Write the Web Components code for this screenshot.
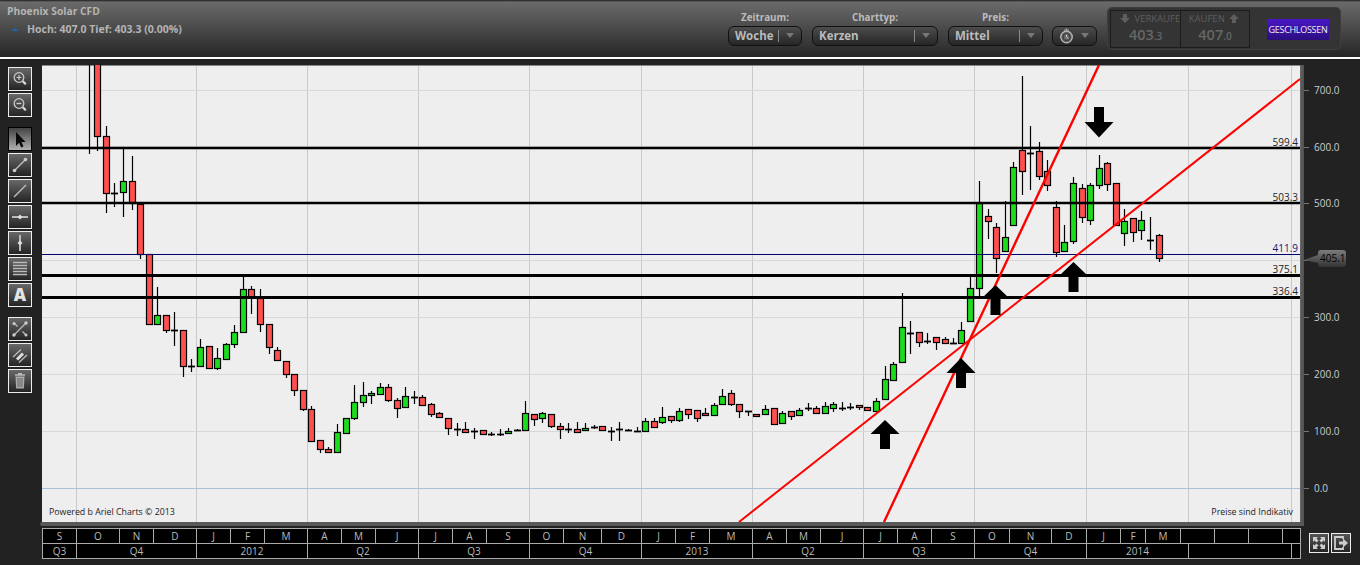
<!DOCTYPE html>
<html lang="de">
<head>
<meta charset="utf-8">
<title>Phoenix Solar CFD</title>
<style>
html, body { margin: 0; height: 565px; overflow: hidden; background: #222; font-family: "Open Sans", "Liberation Sans", sans-serif; }
.main { display: flex; height: 463px; padding-top: 6px; }
.bottom { display: flex; padding-left: 42px; }
</style>
</head>
<body>
<top-bar>
  <instrument-info slot="info" name="Phoenix Solar CFD" stats="Hoch: 407.0 Tief: 403.3 (0.00%)"></instrument-info>
  <select-box slot="controls" label="Zeitraum:" value="Woche" width="74"></select-box>
  <select-box slot="controls" label="Charttyp:" value="Kerzen" width="126"></select-box>
  <select-box slot="controls" label="Preis:" value="Mittel" width="95"></select-box>
  <select-box slot="controls" clock width="45" style="margin-left:-1px"></select-box>
  <price-panel slot="panel"></price-panel>
</top-bar>
<div class="main">
  <tool-bar>
    <tool-button icon="zoomin"></tool-button>
    <tool-button icon="zoomout" group></tool-button>
    <tool-button icon="arrow" active></tool-button>
    <tool-button icon="segment"></tool-button>
    <tool-button icon="line"></tool-button>
    <tool-button icon="hline"></tool-button>
    <tool-button icon="vline"></tool-button>
    <tool-button icon="stack"></tool-button>
    <tool-button icon="text" group></tool-button>
    <tool-button icon="cross"></tool-button>
    <tool-button icon="parallel"></tool-button>
    <tool-button icon="trash"></tool-button>
  </tool-bar>
  <candle-chart></candle-chart>
</div>
<div class="bottom">
  <time-line></time-line>
  <corner-buttons></corner-buttons>
</div>

<script>
// svg bodies for the tool buttons, all on a 24x24 box
const ICONS = {
  zoomin: '<circle cx="11" cy="10.5" r="4.800" fill="none" stroke="#ccc" stroke-width="1.300"/><path d="M11 8v5M8.500 10.500h5" stroke="#ccc" stroke-width="1.200"/><path d="M14.800 14.300l3 3" stroke="#ddd" stroke-width="2.200"/>',
  zoomout: '<circle cx="11" cy="10.5" r="4.800" fill="none" stroke="#ccc" stroke-width="1.300"/><path d="M8.500 10.500h5" stroke="#ccc" stroke-width="1.400"/><path d="M14.800 14.300l3 3" stroke="#ddd" stroke-width="2.200"/>',
  arrow: '<path d="M8 5v14l3.200-3.200 2 4.700 2.300-1-2.100-4.500h4.200z" fill="#0a0a0a"/>',
  segment: '<path d="M6 18L18 6" stroke="#bbb" stroke-width="1.500"/><circle cx="6.500" cy="17.500" r="1.800" fill="#ccc"/><circle cx="17.500" cy="6.500" r="1.800" fill="#ccc"/>',
  line: '<path d="M6 18L18 6" stroke="#bbb" stroke-width="1.500"/>',
  hline: '<path d="M4 12h16" stroke="#bbb" stroke-width="2"/><path d="M12 9.500l2.500 2.500-2.500 2.500-2.500-2.500z" fill="#ddd"/>',
  vline: '<path d="M12 4v16" stroke="#bbb" stroke-width="2"/><path d="M12 9.500l2.500 2.500-2.500 2.500-2.500-2.500z" fill="#ddd"/>',
  stack: '<path d="M5 5.500h14M5 8.500h14M5 11.500h14M5 14.500h14M5 17.500h14" stroke="#bbb" stroke-width="1.300"/>',
  cross: '<path d="M6 18L18 6M6 6l3.500 3.500M14.500 14.500L18 18" stroke="#bbb" stroke-width="1.300"/><circle cx="6" cy="6.500" r="1.500" fill="#ccc"/><circle cx="18" cy="6" r="1.700" fill="#ccc"/><circle cx="6" cy="18" r="1.700" fill="#ccc"/><circle cx="18" cy="18" r="1.500" fill="#ccc"/>',
  parallel: '<path d="M5 14L13 6.500M11 19.500L19 12" stroke="#bbb" stroke-width="1.300"/><path d="M9 16.500l6-6" stroke="#ddd" stroke-width="3"/>',
  trash: '<path d="M7.500 7.500h9l-.6 12h-7.800z" fill="#aaa"/><path d="M7 6h10M10 4.600h4" stroke="#bbb" stroke-width="1.400"/><path d="M10 9v9M12 9v9M14 9v9" stroke="#666"/>'
};

class TopBar extends HTMLElement {
  constructor() {
    super();
    this.attachShadow({ mode: "open" });
    this.shadowRoot.innerHTML = `<style>
      :host { display: flex; box-sizing: border-box; height: 59px; justify-content: space-between;
        background: linear-gradient(#1e1e1e 0, #6a6a6a 2px, #262626 57px, #fff 57px); color: #aaa; }
      .right { display: flex; align-items: flex-start; padding-right: 19px; }
      .controls { display: flex; gap: 10px; padding-top: 10px; margin-right: 10px; }
    </style>
    <slot name="info"></slot>
    <div class="right">
      <div class="controls"><slot name="controls"></slot></div>
      <slot name="panel"></slot>
    </div>`;
  }
}

class InstrumentInfo extends HTMLElement {
  connectedCallback() {
    this.attachShadow({ mode: "open" });
    this.shadowRoot.innerHTML = `<style>
      :host { display: block; padding: 3px 0 0 7px; font: 700 10.300px/17px "Open Sans", sans-serif; color: #b4b4b4; }
      .row { display: flex; align-items: center; margin-top: 1px; }
      .up { width: 0; height: 0; margin: 0 8px 0 4px; border: 4px solid transparent; border-top: 0; border-bottom: 3px solid #1d63b0; }
      .row span + span { font-size: 10.500px; }
    </style>
    <div>${this.getAttribute("name")}</div>
    <div class="row"><span class="up"></span><span>${this.getAttribute("stats")}</span></div>`;
  }
}

class SelectBox extends HTMLElement {
  connectedCallback() {
    const label = this.getAttribute("label") || "";
    const value = this.getAttribute("value") || "";
    const clock = this.hasAttribute("clock");
    this.attachShadow({ mode: "open" });
    this.shadowRoot.innerHTML = `<style>
      :host { display: block; width: ${this.getAttribute("width")}px; font: 700 9.800px/15px "Open Sans", sans-serif; color: #bbb; }
      .label { height: 16px; text-align: center; }
      .box { box-sizing: border-box; height: 20px; display: flex; align-items: center; border: 1px solid #111; border-radius: 6px;
        background: linear-gradient(#4c4c4c, #262626); padding: 0 0 1px 6px; font-size: 11.500px; }
      .value { flex: 1; }
      .sep { width: 1px; height: 12px; background: #888; }
      .tri { width: 0; height: 0; margin: 0 7px 0 7px; border: 4px solid transparent; border-bottom: 0; border-top: 5px solid #777; }
      svg { display: block; }
    </style>
    <div class="label">${label}</div>
    <div class="box">
      <span class="value">${clock ? '<svg width="15" height="18" viewBox="0 0 15 18"><path d="M5 3h5M7.500 1.500v2" stroke="#aaa"/><circle cx="7.500" cy="10" r="5.800" fill="#666" stroke="#bbb" stroke-width="1.200"/><circle cx="7.500" cy="10" r="3.600" fill="none" stroke="#333"/><path d="M7.500 7.500V10l2 1.500" fill="none" stroke="#ccc"/></svg>' : value}</span>
      <span class="sep"></span><span class="tri"></span>
    </div>`;
  }
}

class PricePanel extends HTMLElement {
  constructor() {
    super();
    this.attachShadow({ mode: "open" });
    this.shadowRoot.innerHTML = `<style>
      :host { display: flex; box-sizing: border-box; width: 234px; height: 43px; margin-top: 7px; padding: 3px; align-items: flex-start;
        background: #343434; border-radius: 5px; border: 1px solid #3e3e3e; font: 400 9.500px/12px "Open Sans", sans-serif; color: #5e5e5e; }
      .quote { display: flex; border: 1px solid #1c1c1c; height: 36px; margin: -1px 0 0 -1px; }
      .side { box-sizing: border-box; width: 69px; text-align: center; padding-top: 2px; overflow: hidden; white-space: nowrap; }
      .side:first-child { padding-left: 7px; text-align: left; }
      .side + .side { border-left: 1px solid #1c1c1c; }
      .num { font: 600 14.500px/18px "Open Sans", sans-serif; margin-top: 1px; color: #666; }
      .side:first-child .num { padding-left: 11px; }
      .num small { font-size: 10px; }
      svg { vertical-align: -1px; margin: 0 2px; }
      .closed { box-sizing: border-box; width: 62px; height: 21px; margin: 8px 0 0 17px; text-align: center;
        font: 400 9px/21px "Open Sans", sans-serif; letter-spacing: -.3px; color: #eee; background: linear-gradient(#4a17c4, #2b0e80); }
    </style>
    <div class="quote">
      <div class="side"><svg width="10" height="9"><path d="M3 0h4v4h3L5 9 0 4h3z" fill="#5e5e5e"/></svg> VERKAUFE<div class="num">403<small>.3</small></div></div>
      <div class="side">KAUFEN <svg width="10" height="9"><path d="M3 9h4V5h3L5 0 0 5h3z" fill="#5e5e5e"/></svg><div class="num">407<small>.0</small></div></div>
    </div>
    <div class="closed">GESCHLOSSEN</div>`;
  }
}

class ToolBar extends HTMLElement {
  constructor() {
    super();
    this.attachShadow({ mode: "open" });
    this.shadowRoot.innerHTML = `<style>
      :host { display: flex; flex-direction: column; flex: none; box-sizing: border-box; width: 40px; padding: 2px 0 0 8px; gap: 2px; }
    </style><slot></slot>`;
  }
}

class ToolButton extends HTMLElement {
  connectedCallback() {
    const name = this.getAttribute("icon");
    const active = this.hasAttribute("active");
    const inner = name == "text"
      ? '<span class="a">A</span>'
      : `<svg width="22" height="22" viewBox="1 1 22 22">${ICONS[name]}</svg>`;
    this.attachShadow({ mode: "open" });
    this.shadowRoot.innerHTML = `<style>
      :host { display: block; box-sizing: border-box; width: 24px; height: 24px; border: 1px solid ${active ? "#000" : "#eee"};
        background: ${active ? "linear-gradient(#444, #b0b0b0)" : "linear-gradient(#686868, #242424)"};
        margin-bottom: ${this.hasAttribute("group") ? 8 : 0}px; }
      svg { display: block; }
      .a { display: block; text-align: center; font: 800 17px/22px "Open Sans", sans-serif; color: #e4e4e4; }
    </style>${inner}`;
  }
}

// [x, body top, body bottom, wick top, wick bottom, type]
const CANDLES = [
  [89,0,0,60,154,"w"],[97,40,136,60,151,"r"],[106,136,193,126,213,"r"],[114,193,193,183,207,"d"],[123,181,192,148,217,"g"],
  [132,181,203,156,210,"r"],[140,204,254,204,259,"r"],[149,254,324,254,324,"r"],[157,315,324,287,324,"g"],[166,315,330,315,333,"r"],
  [174,330,330,312,346,"d"],[183,330,366,330,377,"r"],[191,366,366,359,372,"d"],[200,347,366,339,366,"g"],[209,346,368,346,368,"r"],
  [217,358,368,348,370,"g"],[226,344,359,343,359,"g"],[234,332,344,325,348,"g"],[243,289,332,277,332,"g"],[251,289,297,286,314,"r"],
  [260,298,324,289,332,"r"],[269,324,347,324,354,"r"],[277,350,360,347,360,"r"],[286,361,374,361,378,"r"],[294,374,390,374,396,"r"],
  [303,390,409,390,411,"r"],[311,409,441,406,442,"r"],[320,440,449,440,453,"r"],[328,449,452,447,453,"r"],[337,432,452,424,452,"g"],
  [346,418,433,418,433,"g"],[354,402,418,385,420,"g"],[363,395,402,382,407,"g"],[371,393,395,391,404,"g"],[380,387,394,383,394,"g"],
  [388,387,400,384,402,"r"],[397,400,408,398,418,"r"],[405,396,407,387,407,"g"],[414,397,397,391,404,"d"],[422,397,405,395,405,"r"],
  [431,404,414,403,417,"r"],[439,413,417,412,417,"r"],[448,418,428,418,435,"r"],[457,429,429,423,436,"d"],[465,429,432,422,432,"r"],
  [474,431,431,428,439,"d"],[483,430,434,430,434,"r"],[491,434,434,432,436,"d"],[500,434,434,429,436,"d"],[508,431,433,428,433,"g"],
  [517,430,430,429,431,"d"],[525,413,430,401,431,"g"],[534,414,419,414,426,"r"],[542,413,418,412,423,"g"],[551,414,426,414,428,"r"],
  [560,426,429,423,439,"r"],[568,429,429,423,433,"d"],[577,429,432,422,433,"r"],[585,428,430,423,430,"g"],[594,427,427,425,429,"d"],
  [602,426,430,426,430,"r"],[611,431,431,427,441,"d"],[619,429,429,422,441,"d"],[628,430,430,429,431,"d"],[637,431,431,427,432,"d"],
  [645,421,431,418,431,"g"],[654,421,427,418,427,"r"],[662,417,422,407,424,"g"],[671,416,420,416,423,"r"],[679,411,420,408,422,"g"],
  [688,409,414,409,419,"r"],[697,410,418,410,422,"r"],[705,413,415,408,415,"r"],[714,405,415,403,415,"g"],[722,396,404,389,404,"g"],
  [731,393,404,390,406,"r"],[739,404,411,404,418,"r"],[748,411,411,411,416,"d"],[756,414,416,414,417,"r"],[765,409,414,405,414,"g"],
  [774,408,424,408,424,"r"],[782,413,423,411,423,"g"],[791,411,416,411,420,"r"],[799,410,415,408,415,"g"],[808,408,408,403,411,"d"],
  [816,408,413,406,414,"r"],[825,406,413,402,413,"g"],[833,404,408,402,412,"g"],[842,408,408,402,411,"d"],[850,407,407,403,410,"d"],
  [859,405,407,405,410,"r"],[867,407,410,407,410,"r"],[876,401,411,398,411,"g"],[885,379,399,366,399,"g"],[893,364,380,362,380,"g"],
  [902,327,362,293,362,"g"],[910,333,333,321,354,"d"],[919,332,342,332,347,"r"],[927,341,341,333,344,"d"],[936,337,342,337,350,"r"],
  [945,339,343,337,343,"r"],[953,343,343,338,344,"d"],[961,330,343,322,343,"g"],[970,288,321,277,321,"g"],[979,203,288,181,297,"g"],
  [988,216,221,209,239,"r"],[996,227,258,223,273,"r"],[1005,237,251,201,251,"g"],[1013,167,225,162,225,"g"],[1022,150,171,76,195,"r"],
  [1030,153,153,126,190,"d"],[1039,151,176,142,180,"r"],[1047,171,185,160,191,"r"],[1056,207,252,201,257,"r"],[1064,242,251,225,251,"g"],
  [1073,183,241,177,244,"g"],[1082,188,217,184,223,"r"],[1090,185,220,183,225,"g"],[1099,168,185,155,189,"g"],[1107,163,184,162,191,"r"],
  [1116,183,225,183,225,"r"],[1124,221,233,209,246,"g"],[1133,218,232,218,242,"r"],[1141,220,230,211,240,"g"],[1150,240,240,217,250,"d"],
  [1159,235,258,234,262,"r"]
];

class CandleChart extends HTMLElement {
  connectedCallback() {
    const grid = [76, 196, 307, 418, 529, 641, 752, 863, 974, 1086, 1188, 1291]
      .map(x => `<path d="M${x + .5} 66V522" stroke="#c9c9c9"/>`).join("");
    const rows = [90, 146, 203, 260, 317, 374, 431]
      .map(y => `<path d="M42 ${y + .5}H1300" stroke="#d8d8d8"/>`).join("");
    const axis = [[700, 90], [600, 147], [500, 203], [400, 260], [300, 317], [200, 374], [100, 431], [0, 488]]
      .map(([v, y]) => `<path d="M1304 ${y + .5}h5" stroke="#777"/>` + (v == 400 ? "" :
        `<text x="1314" y="${y + 4}" fill="#ccc" font-size="10">${v.toFixed(1)}</text>`)).join("");
    const candles = CANDLES.map(([x, top, bot, wt, wb, t]) => {
      const cx = x + .5;
      let s = `<path d="M${cx} ${wt}V${wb}" stroke="#000" stroke-width="1.200"/>`;
      if (t == "d") s += `<path d="M${cx - 3.5} ${top + .5}h7" stroke="#000" stroke-width="1.800"/>`;
      if (t == "r" || t == "g") {
        s += `<rect x="${cx - 3}" y="${top + .5}" width="6" height="${bot - top}" fill="${t == "r" ? "#ff5050" : "#1ddc1d"}" stroke="#000" stroke-width="1.200"/>`;
      }
      return s;
    }).join("");
    const levels = [[148, 2.4, "599.4", 146], [203, 2.4, "503.3", 201], [275.5, 3, "375.1", 273], [297.5, 3, "336.4", 295]]
      .map(([y, w, v, ty]) => `<path d="M42 ${y}H1300" stroke="#000" stroke-width="${w}"/>
        <text x="1298" y="${ty}" text-anchor="end" fill="#222" font-size="10">${v}</text>`).join("");
    const up = (cx, tip, base, bottom) =>
      `<path d="M${cx} ${tip}l14.500 ${base - tip}h-9.500V${bottom}h-10V${base}h-9.500z" fill="#000"/>`;

    this.attachShadow({ mode: "open" });
    this.shadowRoot.innerHTML = `<style>
      :host { display: block; flex: none; width: 1320px; height: 461px; }
      svg { display: block; font-family: "Open Sans", sans-serif; }
    </style>
    <svg width="1320" height="461" viewBox="40 65 1320 461">
      <rect x="42" y="65" width="1260" height="458" fill="#eee"/>
      <path d="M42 65.500H1302" stroke="#888"/>
      ${grid}${rows}
      <path d="M42 488.500H1300" stroke="#a9c2da"/>
      ${candles}
      ${levels}
      <path d="M42 254.500H1300" stroke="#00006e"/>
      <text x="1298" y="252" text-anchor="end" fill="#14147a" font-size="10">411.9</text>
      <path d="M884 522L1099 65" stroke="#f00" stroke-width="2.400"/>
      <path d="M739 522L1300 79" stroke="#f00" stroke-width="2"/>
      ${up(885, 420, 434, 449)}${up(961, 358, 373, 388)}${up(995.5, 285, 299, 315)}${up(1073.500, 262, 276, 292)}
      <path d="M1094 107h10v15h9.500L1099 137.500 1084.500 122h9.500z" fill="#000"/>
      <text x="49" y="515" fill="#222" font-size="8.800">Powered b Ariel Charts © 2013</text>
      <text x="1293" y="515" text-anchor="end" fill="#222" font-size="8.800">Preise sind Indikativ</text>
      <path d="M42 524H1304M1302 65V524" stroke="#585858" stroke-width="3.800" fill="none"/>
      <circle cx="42" cy="524" r="1.900" fill="#585858"/>
      ${axis}
      <defs><linearGradient id="tag" x1="0" y1="0" x2="0" y2="1"><stop offset="0" stop-color="#7c7c7c"/><stop offset="1" stop-color="#333"/></linearGradient></defs>
      <path d="M1304 260l14-5v-2q0-3 3-3h22q3 0 3 3v11q0 3-3 3h-22q-3 0-3-3v-1z" fill="url(#tag)"/>
      <text x="1320" y="262" fill="#000" font-size="10">405.1</text>
    </svg>`;
  }
}

class TimeLine extends HTMLElement {
  connectedCallback() {
    const months = [[42, "S"], [76, "O"], [119, "N"], [153, "D"], [196, "J"], [230, "F"], [264, "M"], [307, "A"], [341, "M"], [375, "J"],
      [418, "J"], [452, "A"], [486, "S"], [529, "O"], [563, "N"], [601, "D"], [641, "J"], [675, "F"], [709, "M"], [752, "A"], [786, "M"], [820, "J"],
      [863, "J"], [897, "A"], [931, "S"], [974, "O"], [1009, "N"], [1051, "D"], [1086, "J"], [1120, "F"], [1145, "M"], [1180, ""], [1214, ""], [1248, ""], [1282, ""]];
    const quarters = [[42, "Q3"], [76, "Q4"], [196, "2012"], [307, "Q2"], [418, "Q3"], [529, "Q4"], [641, "2013"], [752, "Q2"], [863, "Q3"], [974, "Q4"],
      [1086, "2014"], [1188, ""], [1291, ""]];
    const row = list => list.map(([x, t], i) => {
      const next = i + 1 < list.length ? list[i + 1][0] : 1300;
      return `<div class="cell" style="width:${next - x}px">${t}</div>`;
    }).join("");
    this.attachShadow({ mode: "open" });
    this.shadowRoot.innerHTML = `<style>
      :host { display: block; flex: none; box-sizing: border-box; width: 1259px; height: 31px; background: #000; border: solid #aaa; border-width: 1px 0 1px 1px;
        font: 400 10px/14px "Open Sans", sans-serif; color: #bbb; }
      .row { display: flex; height: 14px; }
      .row + .row { border-top: 1px solid #aaa; }
      .cell { box-sizing: border-box; border-right: 1px solid #aaa; text-align: center; }
    </style>
    <div class="row">${row(months)}</div>
    <div class="row">${row(quarters)}</div>`;
  }
}

class CornerButtons extends HTMLElement {
  constructor() {
    super();
    this.attachShadow({ mode: "open" });
    this.shadowRoot.innerHTML = `<style>
      :host { display: flex; gap: 2px; padding: 5px 0 0 8px; }
      svg { display: block; box-sizing: border-box; width: 20px; height: 20px; border: 1px solid #eee; background: linear-gradient(#555, #262626); }
    </style>
    <svg viewBox="0 0 18 18"><path d="M3 3h5L6.500 4.500 8.500 6.500 6.500 8.500 4.500 6.500 3 8zM15 3v5L13.500 6.500 11.500 8.500 9.500 6.500 11.500 4.500 10 3zM3 15v-5L4.500 11.500 6.500 9.500 8.500 11.500 6.500 13.500 8 15zM15 15h-5L11.500 13.500 9.500 11.500 11.500 9.500 13.500 11.500 15 10z" fill="#ccc"/></svg>
    <svg viewBox="0 0 18 18"><path d="M11 5V3H3v12h8v-2" fill="none" stroke="#ccc" stroke-width="1.800"/><path d="M7 7.500h4V4.500L16 9l-5 4.500v-3H7z" fill="#ccc"/></svg>`;
  }
}

customElements.define("top-bar", TopBar);
customElements.define("instrument-info", InstrumentInfo);
customElements.define("select-box", SelectBox);
customElements.define("price-panel", PricePanel);
customElements.define("tool-bar", ToolBar);
customElements.define("tool-button", ToolButton);
customElements.define("candle-chart", CandleChart);
customElements.define("time-line", TimeLine);
customElements.define("corner-buttons", CornerButtons);
</script>
</body>
</html>
